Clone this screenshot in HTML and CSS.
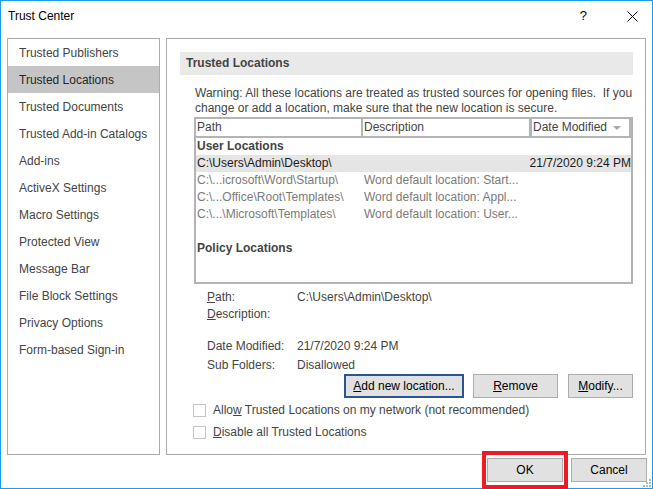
FILE: index.html
```html
<!DOCTYPE html>
<html>
<head>
<meta charset="utf-8">
<link rel="stylesheet" href="styles.css">
</head>
<body>
<div class="window">
  <div class="titlebar">
    <span class="title">Trust Center</span>
    <span class="help">?</span>
    <svg class="close" width="11" height="11" viewBox="0 0 11 11"><path d="M0.5 0.5 L10.5 10.5 M10.5 0.5 L0.5 10.5" stroke="#000" stroke-width="1" fill="none"/></svg>
  </div>
  <div class="main">
    <div class="sidebar">
      <div class="nav-item">Trusted Publishers</div>
      <div class="nav-item selected">Trusted Locations</div>
      <div class="nav-item">Trusted Documents</div>
      <div class="nav-item">Trusted Add-in Catalogs</div>
      <div class="nav-item">Add-ins</div>
      <div class="nav-item">ActiveX Settings</div>
      <div class="nav-item">Macro Settings</div>
      <div class="nav-item">Protected View</div>
      <div class="nav-item">Message Bar</div>
      <div class="nav-item">File Block Settings</div>
      <div class="nav-item">Privacy Options</div>
      <div class="nav-item">Form-based Sign-in</div>
    </div>
    <div class="panel">
      <div class="section-header">Trusted Locations</div>
      <div class="content">
        <p class="warning">Warning: All these locations are treated as trusted sources for opening files.&nbsp; If you change or add a location, make sure that the new location is secure.</p>
        <div class="table">
          <div class="thead">
            <div class="th c1">Path</div>
            <div class="th c2">Description</div>
            <div class="th c3">Date Modified<span class="sort"></span></div>
          </div>
          <div class="row group">User Locations</div>
          <div class="row sel"><span class="c1">C:\Users\Admin\Desktop\</span><span class="c2"></span><span class="c3">21/7/2020 9:24 PM</span></div>
          <div class="row dim"><span class="c1">C:\...icrosoft\Word\Startup\</span><span class="c2">Word default location: Start...</span><span class="c3"></span></div>
          <div class="row dim"><span class="c1">C:\...Office\Root\Templates\</span><span class="c2">Word default location: Appl...</span><span class="c3"></span></div>
          <div class="row dim"><span class="c1">C:\...\Microsoft\Templates\</span><span class="c2">Word default location: User...</span><span class="c3"></span></div>
          <div class="row"></div>
          <div class="row group">Policy Locations</div>
        </div>
        <div class="details">
          <div class="drow"><span class="dlabel"><u>P</u>ath:</span><span>C:\Users\Admin\Desktop\</span></div>
          <div class="drow"><span class="dlabel"><u>D</u>escription:</span><span></span></div>
          <div class="drow gap"><span class="dlabel">Date Modified:</span><span>21/7/2020 9:24 PM</span></div>
          <div class="drow gap1"><span class="dlabel">Sub Folders:</span><span>Disallowed</span></div>
        </div>
        <div class="actions">
          <div class="btn default add"><u>A</u>dd new location...</div>
          <div class="btn remove"><u>R</u>emove</div>
          <div class="btn modify"><u>M</u>odify...</div>
        </div>
        <div class="checks">
          <div class="check"><span class="box"></span><span class="clabel">Allo<u>w</u> Trusted Locations on my network (not recommended)</span></div>
          <div class="check"><span class="box"></span><span class="clabel"><u>D</u>isable all Trusted Locations</span></div>
        </div>
      </div>
    </div>
  </div>
  <div class="footer">
    <div class="btn dlg">OK</div>
    <div class="btn dlg">Cancel</div>
  </div>
  <div class="annot"></div>
  <svg class="grip" width="9" height="9" viewBox="0 0 9 9">
    <rect x="6" y="0" width="2" height="2" fill="#b8b8b8"/>
    <rect x="3" y="3" width="2" height="2" fill="#b8b8b8"/>
    <rect x="6" y="3" width="2" height="2" fill="#b8b8b8"/>
    <rect x="0" y="6" width="2" height="2" fill="#b8b8b8"/>
    <rect x="3" y="6" width="2" height="2" fill="#b8b8b8"/>
    <rect x="6" y="6" width="2" height="2" fill="#b8b8b8"/>
  </svg>
</div>
</body>
</html>
```

FILE: styles.css
```css
html, body {
  margin: 0;
  padding: 0;
  background: #fff;
}
body {
  font-family: "Liberation Sans", Arial, sans-serif;
  font-size: 12px;
  color: #444;
}
.window {
  position: relative;
  width: 653px;
  height: 489px;
  box-sizing: border-box;
  border: 1px solid #1a9cf0;
  display: flex;
  flex-direction: column;
  background: #fff;
}
.titlebar {
  height: 37px;
  flex: none;
  display: flex;
  align-items: flex-start;
  padding: 7px 0 0 7px;
  box-sizing: border-box;
}
.title {
  color: #000;
  line-height: 16px;
}
.help {
  margin-left: auto;
  color: #000;
  font-size: 13px;
  line-height: 16px;
  margin-right: 40px;
}
.close {
  margin-top: 3px;
  margin-right: 14px;
}
.main {
  flex: none;
  height: 417px;
  display: flex;
  gap: 6px;
  padding-left: 6px;
}
.sidebar {
  width: 153px;
  box-sizing: border-box;
  border: 1px solid #ababab;
}
.nav-item {
  height: 27px;
  line-height: 29px;
  padding-left: 11px;
  color: #444;
  white-space: nowrap;
}
.nav-item.selected {
  background: #c5c5c5;
  color: #262626;
}
.panel {
  width: 480px;
  box-sizing: border-box;
  border: 1px solid #ababab;
  padding: 13px 12px 0 13px;
}
.section-header {
  height: 23px;
  line-height: 23px;
  background: #e9e9e9;
  font-weight: bold;
  padding-left: 6px;
  color: #444;
}
.content {
  padding-left: 14px;
}
.warning {
  margin: 11px 0 0 1px;
  line-height: 15px;
  color: #444;
}
.table {
  margin-top: 1px;
  height: 167px;
  box-sizing: border-box;
  border: 2px solid #b4b4b4;
  border-top: 0;
}
.thead {
  display: flex;
  background: #b4b4b4;
  padding: 2px 0 2px 2px;
  margin: 0 -2px;
}
.th {
  background: #fff;
  height: 17px;
  line-height: 17px;
  padding-left: 1px;
  box-sizing: border-box;
  color: #444;
  position: relative;
}
.th.c1 { width: 165px; }
.th.c2 { width: 166px; margin-left: 2px; }
.th.c3 { width: 97px; margin-left: 3px; }
.sort {
  position: absolute;
  right: 8px;
  top: 7px;
  width: 0;
  height: 0;
  border-left: 4px solid transparent;
  border-right: 4px solid transparent;
  border-top: 4px solid #a8a8a8;
}
.row {
  height: 17px;
  line-height: 17px;
  display: flex;
  padding-left: 1px;
  white-space: nowrap;
}
.row .c1 { width: 167px; overflow: hidden; }
.row .c2 { width: 170px; overflow: hidden; }
.row .c3 { flex: 1; }
.row.group {
  font-weight: bold;
  color: #444;
}
.row.sel {
  background: #e5e5e5;
  color: #1a1a1a;
}
.row.dim {
  color: #7a7a7a;
}
.details {
  margin-top: 5px;
  padding-left: 13px;
}
.drow {
  display: flex;
  height: 17px;
  line-height: 17px;
}
.drow.gap { margin-top: 15px; }
.drow.gap1 { margin-top: 2px; }
.dlabel {
  width: 90px;
}
.actions {
  display: flex;
  justify-content: flex-end;
  margin-top: 0;
  gap: 9px;
}
.btn {
  box-sizing: border-box;
  height: 24px;
  background: #e1e1e1;
  border: 1px solid #adadad;
  color: #000;
  text-align: center;
  line-height: 22px;
  white-space: nowrap;
}
.btn.default {
  border: 2px solid #2b5591;
  line-height: 20px;
}
.btn.add { width: 120px; }
.btn.remove { width: 85px; margin-right: 1px; }
.btn.modify { width: 65px; }
.checks {
  margin-top: 1px;
  margin-left: -1px;
}
.check {
  display: flex;
  align-items: center;
  height: 22px;
}
.box {
  width: 13px;
  height: 13px;
  box-sizing: border-box;
  border: 1px solid #c4c4c4;
  background: #fff;
  margin-right: 7px;
}
.clabel { color: #444; }
.footer {
  flex: 1;
  display: flex;
  justify-content: flex-end;
  gap: 8px;
  padding: 3px 5px 0 0;
}
.btn.dlg {
  width: 76px;
  height: 24px;
}
.annot {
  position: absolute;
  left: 481px;
  top: 450px;
  width: 86px;
  height: 38px;
  box-sizing: border-box;
  border: 4px solid #ed1c24;
}
.grip {
  position: absolute;
  right: 0;
  bottom: 0;
}
```
